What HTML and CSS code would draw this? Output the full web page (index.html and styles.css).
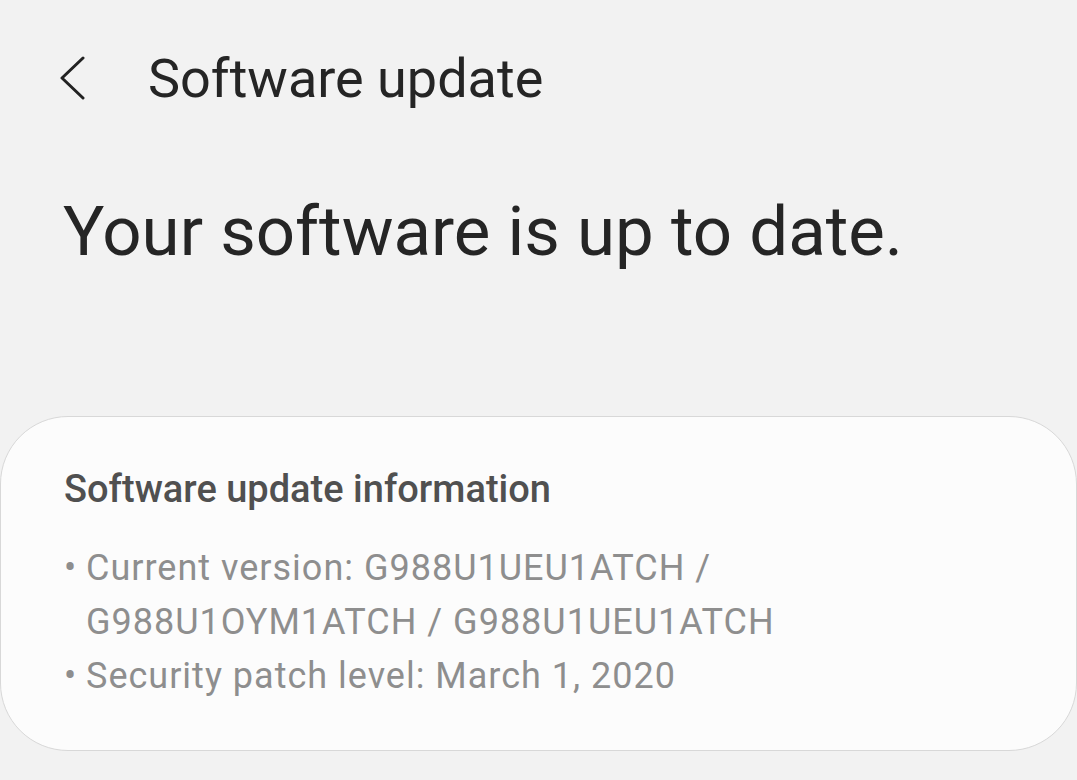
FILE: index.html
```html
<!DOCTYPE html>
<html lang="en">
<head>
<meta charset="utf-8">
<title>Software update</title>
<link rel="stylesheet" href="styles.css">
</head>
<body>
<div class="screen">
  <header class="appbar">
    <span class="back" aria-label="Back">
      <svg width="28" height="44" viewBox="0 0 28 44"><path d="M25 2 L4 22 L25 42" fill="none" stroke="#222" stroke-width="3" stroke-linecap="round" stroke-linejoin="round"/></svg>
    </span>
    <h1 class="title">Software update</h1>
  </header>
  <h2 class="status">Your software is up to date.</h2>
  <section class="card">
    <h3 class="card-title">Software update information</h3>
    <ul class="info">
      <li><span class="dot">•</span><span class="txt">Current version: G988U1UEU1ATCH / G988U1OYM1ATCH / G988U1UEU1ATCH</span></li>
      <li><span class="dot">•</span><span class="txt">Security patch level: March 1, 2020</span></li>
    </ul>
  </section>
</div>
</body>
</html>
```
FILE: styles.css
```css
html, body {
  margin: 0;
  padding: 0;
  background: #f2f2f2;
}
body {
  font-family: Roboto, "Noto Sans", sans-serif;
  color: #252525;
  width: 1077px;
  height: 780px;
  overflow: hidden;
}
.screen {
  display: flex;
  flex-direction: column;
}
.appbar {
  display: flex;
  align-items: center;
  height: 80px;
  margin-top: 38px;
  padding-left: 58px;
}
.back {
  display: flex;
  width: 90px;
}
.title {
  margin: 0;
  font-size: 54px;
  font-weight: 400;
  color: #252525;
}
.status {
  margin: 69px 0 0 63px;
  font-size: 69px;
  font-weight: 400;
  line-height: 90px;
  color: #252525;
}
.card {
  margin-top: 139px;
  height: 335px;
  box-sizing: border-box;
  background: #fcfcfc;
  border: 1px solid #d8d8d8;
  border-radius: 68px;
  padding: 47px 40px 0 63px;
}
.card-title {
  margin: 0;
  font-size: 38px;
  font-weight: 500;
  color: #505050;
  line-height: 50px;
}
.info {
  list-style: none;
  margin: 27px 0 0 0;
  padding: 0;
  font-size: 36px;
  letter-spacing: 1px;
  line-height: 54px;
  color: #8e8e8e;
}
.info li {
  display: flex;
}
.dot {
  width: 22px;
  flex: none;
  letter-spacing: 0;
}
.txt {
  width: 720px;
}
```
